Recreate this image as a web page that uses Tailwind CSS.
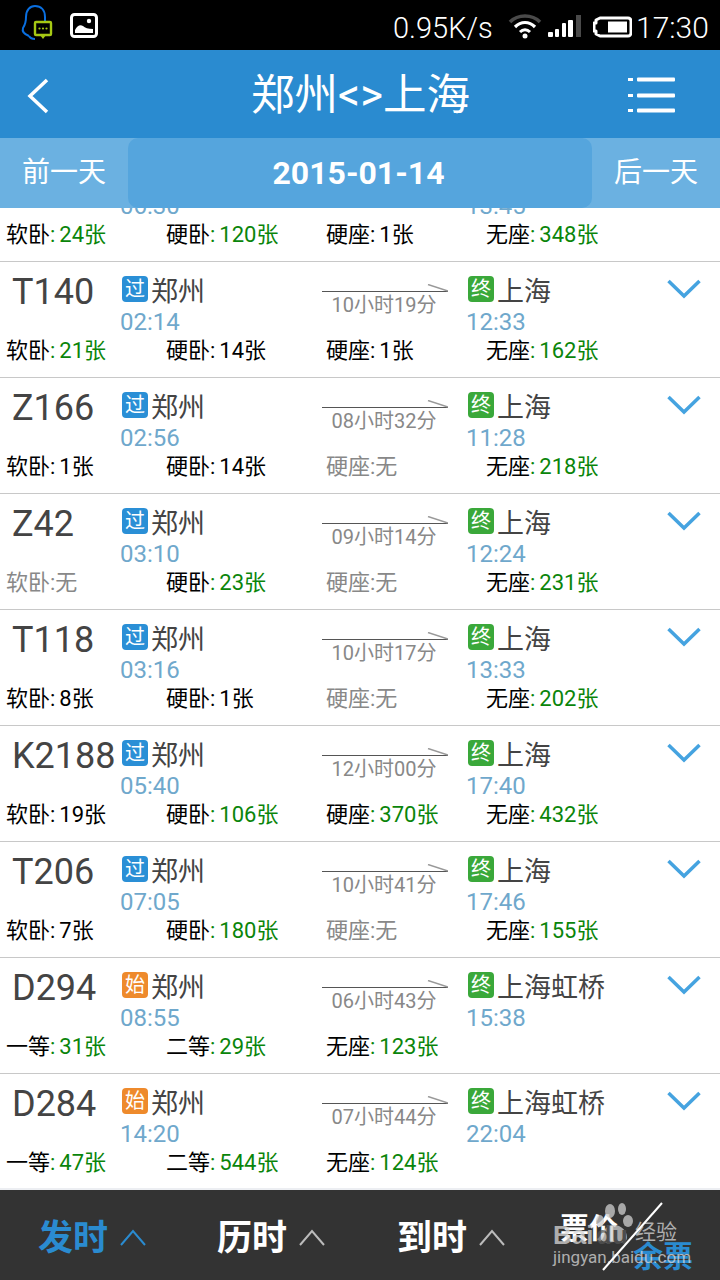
<!DOCTYPE html>
<html>
<head>
  <meta charset="utf-8">
  <title>郑州-上海 车次列表</title>
  <script src="https://cdn.jsdelivr.net/npm/@tailwindcss/browser@4"></script>
</head>
<body>
<div class="relative flex flex-col w-[720px] h-[1280px] overflow-hidden bg-white font-['Roboto','Noto_Sans_CJK_SC',sans-serif]">

  <!-- status bar -->
  <div class="flex items-center h-[50px] bg-black text-white shrink-0">
    <svg class="ml-[20px]" width="34" height="44" viewBox="0 0 34 44" fill="none">
      <path d="M9 33C4 31 2 28 3 25C5 22 6 19 6 14C6 7 10 3 15 3C21 3 25 7 25 14V19" stroke="#0a6fe0" stroke-width="2"/>
      <path d="M9 33C10 35 12 36 15 36" stroke="#0a6fe0" stroke-width="2"/>
      <rect x="15" y="19" width="16" height="13" rx="1" fill="#000" stroke="#a6c914" stroke-width="2.4"/>
      <path d="M20 32L23 36L26 32Z" fill="#a6c914"/>
      <circle cx="19.500" cy="25.500" r="1.100" fill="#a6c914"/><circle cx="23" cy="25.500" r="1.100" fill="#a6c914"/><circle cx="26.500" cy="25.500" r="1.100" fill="#a6c914"/>
    </svg>
    <svg class="ml-[16px]" width="28" height="25" viewBox="0 0 28 25" fill="none">
      <rect x="1.500" y="1.500" width="25" height="22" rx="3" stroke="#fff" stroke-width="3"/>
      <path d="M5 20V17C7 13 10 11 13 13C15 15 18 16 23 16V20Z" fill="#fff"/>
      <circle cx="19" cy="8" r="2.200" fill="#fff"/>
    </svg>
    <span class="ml-[295px] mt-[6px] w-[101px] text-[29px] font-light leading-none whitespace-nowrap">0.95K/s</span>
    <svg class="ml-[14px] mt-[2px]" width="34" height="26" viewBox="0 0 34 26" fill="none">
      <path d="M2 9C10 1 24 1 32 9" stroke="#4a4a4a" stroke-width="3.600"/>
      <path d="M7 14C13 8 21 8 27 14" stroke="#fff" stroke-width="3.200"/>
      <path d="M12 19C15 16 19 16 22 19" stroke="#fff" stroke-width="3"/>
      <circle cx="17" cy="23" r="2.500" fill="#fff"/>
    </svg>
    <svg class="ml-[5px] mt-[2px]" width="34" height="24" viewBox="0 0 34 24">
      <rect x="1" y="18" width="5" height="5" rx="1" fill="#fff"/>
      <rect x="8" y="15" width="4" height="8" rx="1" fill="#fff"/>
      <rect x="15" y="9" width="4" height="14" rx="1" fill="#fff"/>
      <rect x="21" y="6" width="5" height="17" rx="1" fill="#fff"/>
      <rect x="29" y="1" width="5" height="22" fill="#4a4a4a"/>
    </svg>
    <svg class="ml-[12px] mt-[3px]" width="39" height="22" viewBox="0 0 39 22" fill="none">
      <path d="M7 2H35A3 3 0 0 1 38 5V17A3 3 0 0 1 35 20H7L3 18V15H1V7H3V4Z" stroke="#fff" stroke-width="3" stroke-linejoin="round"/>
      <rect x="15" y="5.500" width="19" height="11" fill="#fff"/>
    </svg>
    <span class="ml-[4px] mt-[6px] text-[30px] font-light leading-none">17:30</span>
  </div>

  <!-- title bar -->
  <div class="relative flex items-center justify-center h-[88px] bg-[#2a8bd0] text-white shrink-0">
    <svg class="absolute left-[26px] top-[28px]" width="24" height="36" viewBox="0 0 24 36" fill="none">
      <path d="M21 2L4 18L21 34" stroke="#fff" stroke-width="3.500"/>
    </svg>
    <span class="mt-[4px] ml-[1px] text-[43.5px] leading-none">郑州&lt;&gt;上海</span>
    <svg class="absolute left-[627px] top-[26px]" width="48" height="38" viewBox="0 0 48 38">
      <rect x="1" y="2" width="5" height="3" fill="#fff"/><rect x="10" y="1.500" width="38" height="4" rx="1" fill="#fff"/>
      <rect x="1" y="18" width="5" height="3" fill="#fff"/><rect x="10" y="17.500" width="38" height="4" rx="1" fill="#fff"/>
      <rect x="1" y="33" width="5" height="3" fill="#fff"/><rect x="10" y="32.500" width="38" height="4" rx="1" fill="#fff"/>
    </svg>
  </div>

  <!-- date switcher -->
  <div class="flex h-[70px] bg-[#6bb1e1] text-white shrink-0">
    <div class="flex items-center justify-center w-[128px] text-[28px]">前一天</div>
    <div class="flex items-center justify-center w-[464px] pr-[3px] rounded-[10px] bg-[#55a5dd] text-[32px] font-bold">2015-01-14</div>
    <div class="flex items-center justify-center w-[128px] text-[28px]">后一天</div>
  </div>

  <!-- train list -->
  <div id="list" class="flex-1 overflow-hidden"></div>

  <!-- sort bar -->
  <div class="relative flex h-[92px] pt-[8px] bg-[#333] border-t-2 border-[#eceef2] text-white shrink-0">
    <div class="flex items-center pl-[38px] w-[217px] text-[35px] font-bold text-[#2a8bd0]">发时
      <svg class="ml-[12px] mb-[4px]" width="26" height="18" viewBox="0 0 26 18" fill="none"><path d="M1 17L13 3L25 17" stroke="#2a8bd0" stroke-width="2"/></svg>
    </div>
    <div class="flex items-center w-[180px] text-[35px] font-bold">历时
      <svg class="ml-[12px] mb-[4px]" width="26" height="18" viewBox="0 0 26 18" fill="none"><path d="M1 17L13 3L25 17" stroke="#bbb" stroke-width="2"/></svg>
    </div>
    <div class="flex items-center w-[163px] text-[35px] font-bold">到时
      <svg class="ml-[12px] mb-[4px]" width="26" height="18" viewBox="0 0 26 18" fill="none"><path d="M1 17L13 3L25 17" stroke="#bbb" stroke-width="2"/></svg>
    </div>

    <span class="absolute left-[560px] top-[25px] text-[29px] font-bold leading-none">票价</span>
    <span class="absolute left-[633px] top-[52px] text-[30px] font-bold leading-none text-[#2a8bd0]">余票</span>

    <!-- watermark -->
    <div class="absolute left-[553px] top-[0px] w-[160px] h-[90px] text-[#d8d8d8] opacity-75">
      <svg class="absolute left-[42px] top-[13px]" width="40" height="40" viewBox="0 0 40 40" fill="#d0d0d0">
        <ellipse cx="5" cy="18" rx="4" ry="6"/>
        <ellipse cx="15" cy="8" rx="5" ry="7"/>
        <ellipse cx="27" cy="6" rx="4" ry="6"/>
        <ellipse cx="33" cy="18" rx="5" ry="6"/>
        <path d="M6 34C8 26 13 22 19 22C26 22 32 28 32 34C32 40 26 40 19 39C12 40 5 40 6 34Z"/>
      </svg>
      <span class="absolute left-[0px] top-[32px] text-[26px] font-bold leading-none font-['Liberation_Sans',sans-serif]">Bai</span>
      <span class="absolute left-[43px] top-[32px] text-[26px] font-bold leading-none font-['Liberation_Sans',sans-serif] text-[#555]">du</span>
      <span class="absolute left-[82px] top-[32px] text-[21px] leading-none">经验</span>
      <span class="absolute left-[0px] top-[59px] text-[17px] leading-none">jingyan.baidu.com</span>
    </div>
    <svg class="absolute left-[600px] top-[10px]" width="66" height="72" viewBox="0 0 66 72" fill="none">
      <path d="M3 70L62 3" stroke="#fff" stroke-width="2"/>
    </svg>
  </div>
</div>

<script>
  const green = "text-[#0a850a]", gray = "text-[#888]";
  const trains = [
    { no: "", dep: "06:30", arr: "13:45", start: "", end: "", dur: "", seats: [["软卧", "24张"], ["硬卧", "120张"], ["硬座", "1张", 1], ["无座", "348张"]] },
    { no: "T140", dep: "02:14", arr: "12:33", start: "过", end: "上海", dur: "10小时19分", seats: [["软卧", "21张"], ["硬卧", "14张", 1], ["硬座", "1张", 1], ["无座", "162张"]] },
    { no: "Z166", dep: "02:56", arr: "11:28", start: "过", end: "上海", dur: "08小时32分", seats: [["软卧", "1张", 1], ["硬卧", "14张", 1], ["硬座", "无"], ["无座", "218张"]] },
    { no: "Z42", dep: "03:10", arr: "12:24", start: "过", end: "上海", dur: "09小时14分", seats: [["软卧", "无"], ["硬卧", "23张"], ["硬座", "无"], ["无座", "231张"]] },
    { no: "T118", dep: "03:16", arr: "13:33", start: "过", end: "上海", dur: "10小时17分", seats: [["软卧", "8张", 1], ["硬卧", "1张", 1], ["硬座", "无"], ["无座", "202张"]] },
    { no: "K2188", dep: "05:40", arr: "17:40", start: "过", end: "上海", dur: "12小时00分", seats: [["软卧", "19张", 1], ["硬卧", "106张"], ["硬座", "370张"], ["无座", "432张"]] },
    { no: "T206", dep: "07:05", arr: "17:46", start: "过", end: "上海", dur: "10小时41分", seats: [["软卧", "7张", 1], ["硬卧", "180张"], ["硬座", "无"], ["无座", "155张"]] },
    { no: "D294", dep: "08:55", arr: "15:38", start: "始", end: "上海虹桥", dur: "06小时43分", seats: [["一等", "31张"], ["二等", "29张"], ["无座", "123张"]] },
    { no: "D284", dep: "14:20", arr: "22:04", start: "始", end: "上海虹桥", dur: "07小时44分", seats: [["一等", "47张"], ["二等", "544张"], ["无座", "124张"]] },
  ];

  function seatHtml(s) {
    if (s[1] === "无") return `<span class="w-[160px] ${gray}">${s[0]}:无</span>`;
    if (s[2]) return `<span class="flex w-[160px] text-black">${s[0]}:<span class="ml-[4px]">${s[1]}</span></span>`;
    return `<span class="flex w-[160px] text-black">${s[0]}<span class="${green}">:</span><span class="ml-[4px] ${green}">${s[1]}</span></span>`;
  }

  function rowHtml(t, i) {
    const badge = t.start === "始" ? "bg-[#ee8a2c]" : "bg-[#2a8fd6]";
    const top = i === 0
      ? `<div class="h-[26px]"></div>`
      : `<div class="flex items-center h-[26px]"><span class="flex items-center justify-center w-[26px] h-[26px] rounded-[4px] ${badge} text-white text-[20px] leading-none">${t.start}</span><span class="ml-[3px] mt-[6px] text-[27px] leading-none text-[#444]">郑州</span></div>`;
    const arrow = i === 0 ? "" : `<svg class="block mt-[8px]" width="126" height="8" viewBox="0 0 126 8" fill="none"><path d="M0 7.500H126" stroke="#555" stroke-width="1"/><path d="M106 0.500L126 7" stroke="#999" stroke-width="1.500"/></svg><div class="mt-[1px] pr-[2px] text-center text-[20px] leading-[24px] text-[#888]">${t.dur}</div>`;
    const end = i === 0 ? `<div class="h-[26px]"></div>` : `<div class="flex items-center h-[26px]"><span class="flex items-center justify-center w-[26px] h-[26px] rounded-[4px] bg-[#3aa83a] text-white text-[20px] leading-none">终</span><span class="ml-[3px] mt-[6px] text-[27px] leading-none text-[#444]">${t.end}</span></div>`;
    const chevron = i === 0 ? "" : `<svg class="mt-[3px]" width="34" height="20" viewBox="0 0 34 20" fill="none"><path d="M1.500 2L17 17L32.500 2" stroke="#45a3e0" stroke-width="3.500"/></svg>`;
    return `<div class="${i === 0 ? "-mt-[62px]" : ""} h-[116px] pt-[14px] border-b border-[#c8c8c8]">
      <div class="flex h-[64px]">
        <div class="w-[122px] pl-[12px] pt-[1px] text-[36px] leading-[30px] text-[#444] whitespace-nowrap">${t.no}</div>
        <div class="w-[200px]">${top}<div class="mt-[3px] -ml-[2px] h-[34px] text-[24px] leading-[34px] text-[#6fa8cc]">${t.dep}</div></div>
        <div class="w-[146px]"><div class="w-[126px]">${arrow}</div></div>
        <div class="w-[199px]">${end}<div class="mt-[3px] -ml-[2px] h-[34px] text-[24px] leading-[34px] text-[#6fa8cc]">${t.arr}</div></div>
        ${chevron}
      </div>
      <div class="flex pl-[6px] h-[22px] text-[22px] leading-[22px]">${t.seats.map(seatHtml).join("")}</div>
    </div>`;
  }

  document.getElementById("list").innerHTML = trains.map(rowHtml).join("");
</script>
</body>
</html>
